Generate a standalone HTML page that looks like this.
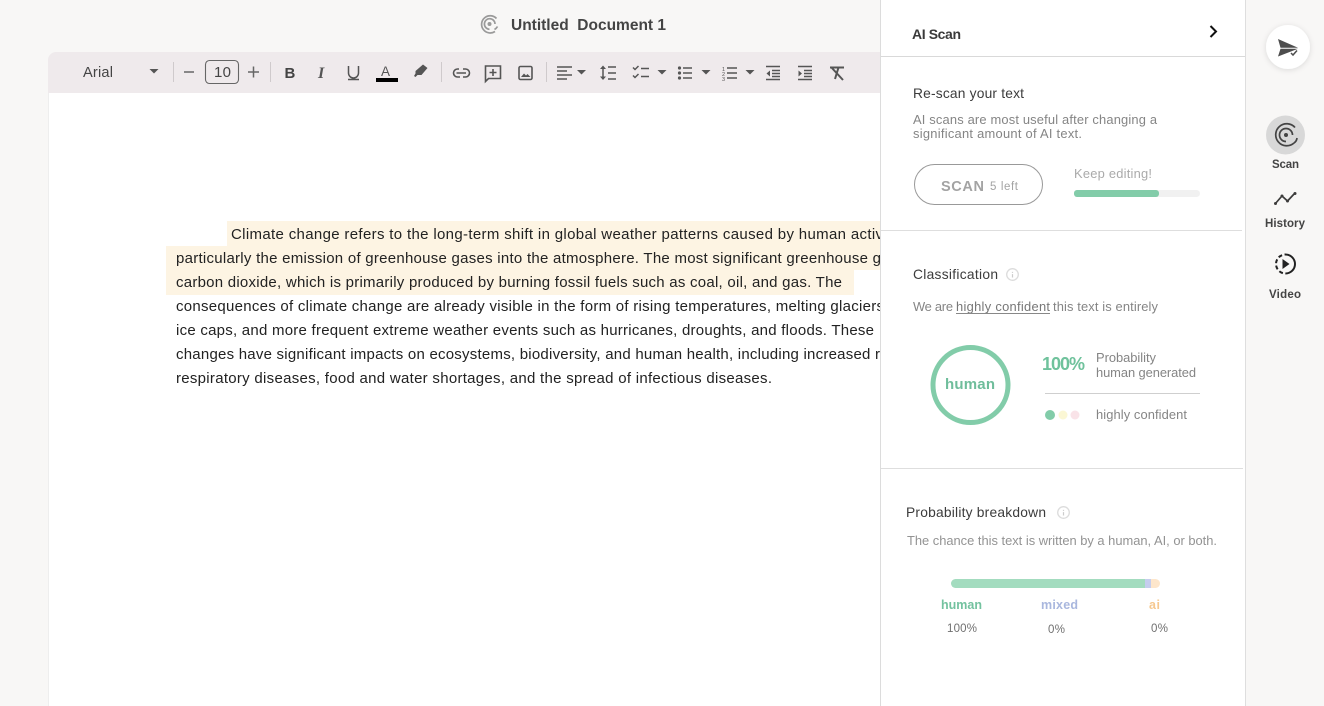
<!DOCTYPE html>
<html><head><meta charset="utf-8"><title>AI Scan</title>
<style>
html,body{margin:0;padding:0;width:1324px;height:706px;overflow:hidden;background:#f8f7f6}
svg{display:block}
text{font-family:"Liberation Sans",Arial,sans-serif;white-space:pre}
.d{font-size:15px;fill:#222}
.g{font-size:12.9px;fill:#858585}
.h{font-size:13.8px;fill:#3c3c3c}
.i{fill:none;stroke:#555;stroke-width:1.6}
.t{fill:#555}
</style></head><body>
<svg width="1324" height="706" viewBox="0 0 1324 706" xmlns="http://www.w3.org/2000/svg">
<defs>
<filter id="s" x="-50%" y="-50%" width="200%" height="200%"><feDropShadow dx="0" dy="1" stdDeviation="3" flood-color="#000" flood-opacity=".12"/></filter>
<g id="car"><path d="M-4.500 -2H4.500L0 2.500Z" fill="#555"/></g>
<g id="info"><circle r="5.8" fill="none" stroke="#dcdcdc" stroke-width="1.3"/><path d="M0 -2.600V-1.600M0 -.4V3" stroke="#ccc" stroke-width="1.200"/></g>
</defs>
<rect width="1324" height="706" fill="#f8f7f6"/>
<!-- doc -->
<rect x="49" y="93" width="840" height="613" fill="#fff"/>
<rect x="48" y="93" width="1" height="613" fill="#eeeeee"/>
<path d="M48 60a8 8 0 0 1 8-8H890V93H48Z" fill="#efeaec"/>
<!-- title -->
<g fill="none" stroke="#9a9a9a" stroke-width="1.700"><path d="M496.500 18.500A8.600 8.600 0 1 0 495 31.500"/><path d="M497.500 26.500A8 8 0 0 1 494.500 29.500M495 24A5.300 5.300 0 1 0 489.500 29.300"/></g><circle cx="489.500" cy="24" r="2" fill="#9a9a9a"/>
<text x="511" y="30" font-size="15.500" font-weight="700" fill="#444" textLength="155">Untitled  Document 1</text>
<!-- toolbar -->
<text x="83" y="77" font-size="14.600" fill="#444" textLength="30">Arial</text>
<use href="#car" x="154" y="71"/>
<g fill="#cfcacc"><rect x="173" y="62" width="1" height="20"/><rect x="270" y="62" width="1" height="20"/><rect x="441" y="62" width="1" height="20"/><rect x="546" y="62" width="1" height="20"/></g>
<path d="M184 72H194M248 72H259M253.500 66.500V77.500" stroke="#666" stroke-width="1.500"/>
<rect x="205.500" y="60.500" width="33" height="23" rx="4" fill="none" stroke="#666" stroke-width="1.100"/>
<text x="214" y="77" font-size="15" fill="#444" textLength="17">10</text>
<text x="284.500" y="78" font-size="15" font-weight="700" fill="#444">B</text>
<text x="318" y="78" font-size="16" font-weight="700" font-style="italic" style="font-family:'Liberation Serif',serif" fill="#555">I</text>
<path d="M348.500 66V73a4.500 4.500 0 0 0 10 0V66M348 79.500H359" fill="none" stroke="#555" stroke-width="1.500"/>
<text x="381" y="76" font-size="13.500" fill="#555">A</text>
<rect x="376" y="78" width="22" height="4" fill="#000"/>
<path d="M423 64.500l4.500 3.500-6 7h-4l-2 2-1.500-1 1.500-2.500 0-2.500Z" fill="#555"/>
<g class="i"><path d="M459 69H457.500a4 4 0 0 0 0 8H460M463 69h2.500a4 4 0 0 1 0 8H463M456.500 73H466"/>
<path d="M485.500 66h15v12.500h-12l-3 3ZM493 69v7M489.500 72.500h7"/>
<rect x="519" y="66.500" width="13" height="13" rx="1.500"/></g>
<path d="M521 77l3-3.500 2 2 1.500-1.500 3 3Z" fill="#555"/>
<path d="M557 67H572M557 71H567M557 75H572M557 79H567" stroke="#555" stroke-width="1.500"/>
<use href="#car" x="581.500" y="72"/>
<path d="M603 66.500V79" stroke="#555" stroke-width="1.500"/><path d="M600 69l3-3.500 3 3.500ZM600 76.500l3 3.500 3-3.500Z" fill="#555"/>
<path d="M608 67H616M608 73H616M608 79H616" stroke="#555" stroke-width="1.600"/>
<path d="M633 67.500l2 2 3.500-3.500M633 75.500l2 2 3.500-3.500" fill="none" stroke="#555" stroke-width="1.500"/><path d="M641 68.500H649M641 76.500H649" stroke="#555" stroke-width="1.600"/>
<use href="#car" x="662" y="72"/>
<g fill="#555"><circle cx="679.500" cy="68" r="1.600"/><circle cx="679.500" cy="73" r="1.600"/><circle cx="679.500" cy="78" r="1.600"/></g><path d="M683 68H692M683 73H692M683 78H692" stroke="#555" stroke-width="1.600"/>
<use href="#car" x="706" y="72"/>
<text x="722" y="71" font-size="5.500" fill="#555">1</text><text x="722" y="76" font-size="5.500" fill="#555">2</text><text x="722" y="81" font-size="5.500" fill="#555">3</text>
<path d="M727 68H737M727 73H737M727 78H737" stroke="#555" stroke-width="1.600"/>
<use href="#car" x="750" y="72"/>
<path d="M766 66.500H780M772 70.500H780M772 73.500H780M772 76.500H780M766 79.500H780" stroke="#555" stroke-width="1.400"/><path d="M770 70.500v6l-3.500-3Z" fill="#555"/>
<path d="M798 66.500H812M804 70.500H812M804 73.500H812M804 76.500H812M798 79.500H812" stroke="#555" stroke-width="1.400"/><path d="M798.500 70.500v6l3.500-3Z" fill="#555"/>
<path d="M830 67.500H844M838.500 67.500L835 79M831 67L843 80" stroke="#555" stroke-width="2" fill="none"/>
<!-- highlight -->
<path d="M227 221H890V295H166V246H227Z" fill="#fdf4e3"/>
<rect x="854" y="270" width="36" height="25" fill="#fff"/>
<!-- body text -->
<text class="d" x="231" y="239" textLength="652">Climate change refers to the long-term shift in global weather patterns caused by human activ</text>
<text class="d" x="176" y="263" textLength="705">particularly the emission of greenhouse gases into the atmosphere. The most significant greenhouse g</text>
<text class="d" x="176" y="287" textLength="666">carbon dioxide, which is primarily produced by burning fossil fuels such as coal, oil, and gas. The</text>
<text class="d" x="176" y="311" textLength="708">consequences of climate change are already visible in the form of rising temperatures, melting glaciers</text>
<text class="d" x="176" y="335" textLength="698">ice caps, and more frequent extreme weather events such as hurricanes, droughts, and floods. These</text>
<text class="d" x="176" y="359" textLength="704">changes have significant impacts on ecosystems, biodiversity, and human health, including increased r</text>
<text class="d" x="176" y="383" textLength="596">respiratory diseases, food and water shortages, and the spread of infectious diseases.</text>
<!-- panel -->
<rect x="881" y="0" width="364" height="706" fill="#fff"/>
<rect x="880" y="0" width="1" height="706" fill="#dcdcdc"/>
<rect x="1245" y="0" width="1" height="706" fill="#dedede"/>
<rect x="881" y="56" width="364" height="1" fill="#d9d9d9"/>
<rect x="881" y="230" width="361" height="1" fill="#dedede"/>
<rect x="881" y="468" width="362" height="1" fill="#dedede"/>
<text x="912" y="39" font-size="14" font-weight="700" fill="#3a3a3a" textLength="49">AI Scan</text>
<path d="M1210.500 26l5.500 5.500-5.500 5.500" fill="none" stroke="#111" stroke-width="2"/>
<text class="h" x="913" y="98" textLength="111">Re-scan your text</text>
<text class="g" x="913" y="124" textLength="244">AI scans are most useful after changing a</text>
<text class="g" x="913" y="138" textLength="169">significant amount of AI text.</text>
<rect x="914.500" y="164.500" width="128" height="40" rx="20" fill="#fff" stroke="#999" stroke-width="1"/>
<text x="941" y="191" font-size="14.500" font-weight="700" fill="#a3a3a3" textLength="43">SCAN</text>
<text x="990" y="190" font-size="11.500" fill="#a3a3a3" textLength="28">5 left</text>
<text x="1074" y="178" font-size="12.900" fill="#aaa" textLength="78">Keep editing!</text>
<rect x="1074" y="190" width="126" height="7" rx="3.500" fill="#f1f1f1"/>
<rect x="1074" y="190" width="85" height="7" rx="3" fill="#82cca9"/>
<text class="h" x="913" y="279" textLength="85">Classification</text>
<use href="#info" x="1012.500" y="274.500"/>
<text class="g" x="913" y="311" textLength="40">We are</text>
<text class="g" x="956" y="311" textLength="94" style="fill:#777">highly confident</text>
<rect x="956" y="313" width="94" height="1" fill="#888"/>
<text class="g" x="1053" y="311" textLength="105">this text is entirely</text>
<circle cx="970.500" cy="385" r="37.500" fill="none" stroke="#82cca9" stroke-width="5"/>
<text x="945" y="389" font-size="15" font-weight="700" fill="#6fbd9b" textLength="50">human</text>
<text x="1042" y="370" font-size="18" font-weight="700" fill="#6fc29c" textLength="43">100%</text>
<text class="g" x="1096" y="362" textLength="60">Probability</text>
<text class="g" x="1096" y="377" textLength="100">human generated</text>
<rect x="1045" y="393" width="155" height="1" fill="#cfcfcf"/>
<circle cx="1050" cy="415" r="5" fill="#82cca9"/><circle cx="1063" cy="415" r="4.500" fill="#fbf7d4"/><circle cx="1075" cy="415" r="4.500" fill="#f9e3e8"/>
<text class="g" x="1096" y="419" textLength="91">highly confident</text>
<text class="h" x="906" y="517" textLength="140">Probability breakdown</text>
<use href="#info" x="1063.500" y="512.500"/>
<text class="g" x="907" y="545" textLength="310" style="fill:#939393">The chance this text is written by a human, AI, or both.</text>
<rect x="1145" y="579" width="15" height="9" rx="4.500" fill="#fde6cb"/>
<path d="M955.500 579H1145V588H955.500a4.500 4.500 0 0 1 0-9Z" fill="#a3dcbf"/>
<rect x="1145" y="579" width="6" height="9" fill="#c5cdee"/>
<text x="941" y="609" font-size="12.500" font-weight="700" fill="#73c29f" textLength="41">human</text>
<text x="1041" y="609" font-size="12.500" font-weight="700" fill="#a9b7de" textLength="37">mixed</text>
<text x="1149" y="609" font-size="12.500" font-weight="700" fill="#f6c88f" textLength="11">ai</text>
<text x="947" y="632" font-size="11.500" fill="#707070" textLength="30">100%</text>
<text x="1048" y="633" font-size="11.500" fill="#707070" textLength="17">0%</text>
<text x="1151" y="632" font-size="11.500" fill="#707070" textLength="17">0%</text>
<!-- rail -->
<circle cx="1288" cy="47" r="22" fill="#fff" filter="url(#s)"/>
<path d="M1278 39L1298 47.800H1280.500L1278 39ZM1280.500 48.800H1298L1278 56.500Z" fill="#4d4d4d"/>
<path d="M1291 53l2 2 4-4.500" fill="none" stroke="#4d4d4d" stroke-width="1.500"/>
<circle cx="1285.500" cy="135" r="19.500" fill="#d8d8d8"/>
<g fill="none" stroke="#444" stroke-width="1.700"><path d="M1295 127.500A11 11 0 1 0 1294 143"/><path d="M1297 138A7 7 0 0 1 1294 143M1292.500 135A6.500 6.500 0 1 0 1286 141.500"/></g><circle cx="1286" cy="135" r="2" fill="#444"/>
<text x="1272" y="168" font-size="11.500" font-weight="700" fill="#444" textLength="27">Scan</text>
<path d="M1275 204L1282 196L1287.500 201L1295 193" fill="none" stroke="#3c3c3c" stroke-width="1.700"/>
<g fill="#3c3c3c"><circle cx="1275.500" cy="203.500" r="1.500"/><circle cx="1282" cy="196" r="1.500"/><circle cx="1287.500" cy="201" r="1.500"/><circle cx="1295" cy="193.500" r="1.500"/></g>
<text x="1265" y="227" font-size="11.500" font-weight="700" fill="#444" textLength="40">History</text>
<circle cx="1285.500" cy="264" r="9.500" fill="none" stroke="#222" stroke-width="2" stroke-dasharray="15 2.500 4 2.500 4 2.500 4 2.500 4 2.500 17"/>
<path d="M1282.500 259l7 5-7 5Z" fill="#222"/>
<text x="1269" y="298" font-size="11.500" font-weight="700" fill="#444" textLength="32">Video</text>
</svg>
</body></html>
